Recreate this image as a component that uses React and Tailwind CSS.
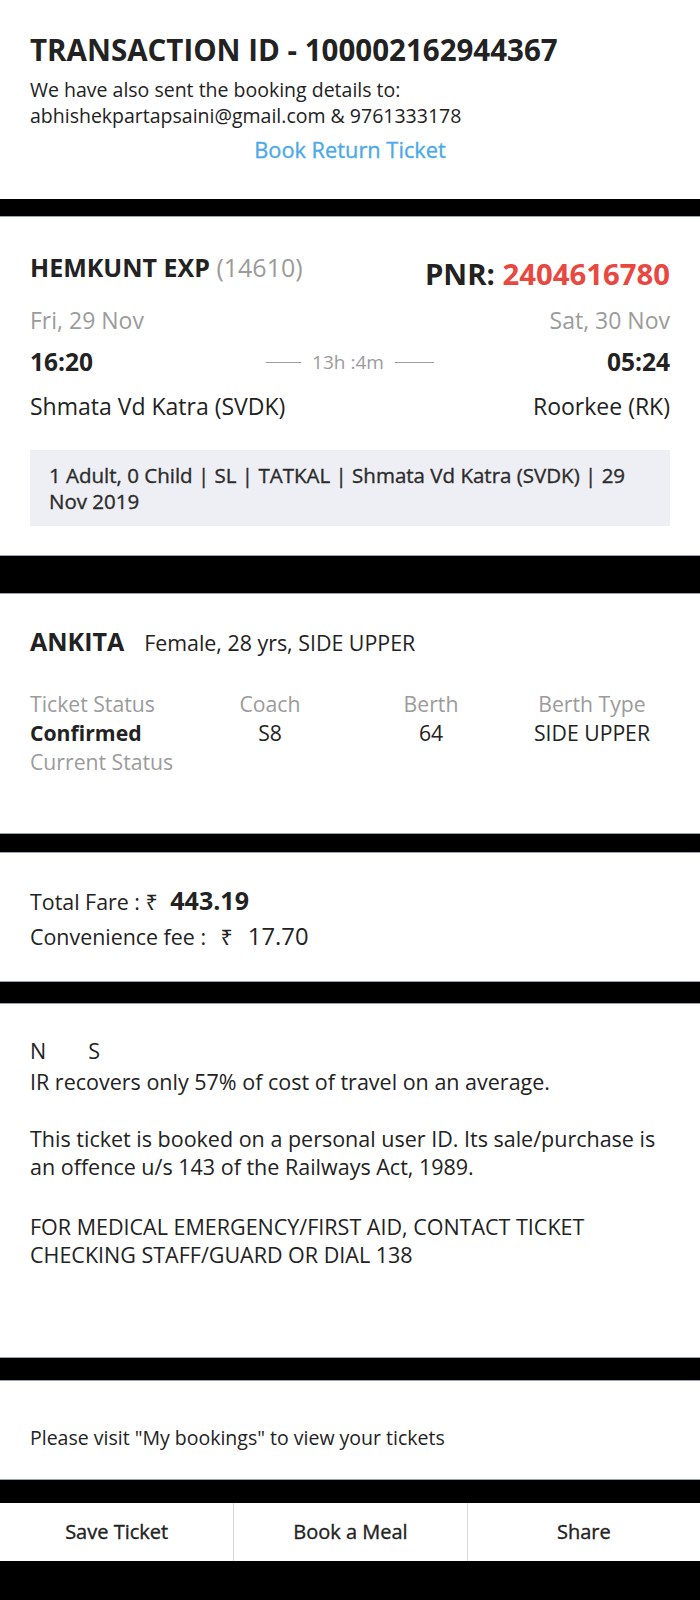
export default function App() {
  const font = { fontFamily: '"Open Sans", "Noto Sans", sans-serif' };
  // Open Sans here has no 500 weight, so a thin stroke stands in for "medium"
  const medium = '[-webkit-text-stroke:0.35px_currentcolor]';

  return (
    <div className="w-[700px] bg-white text-[#222222]" style={font}>
      {/* transaction */}
      <div className="h-[199px] px-[30px] pt-[32px]">
        <h1 className="text-[29.5px] font-bold leading-[36px]">TRANSACTION ID - 100002162944367</h1>
        <p className="mt-[9px] text-[19.5px] leading-[26px]">We have also sent the booking details to:</p>
        <p className="text-[19.5px] leading-[26px]">abhishekpartapsaini@gmail.com &amp; 9761333178</p>
        <div className={'mt-[7px] text-center text-[21.8px] leading-[28px] text-[#4ba9e9] ' + medium}>
          Book Return Ticket
        </div>
      </div>
      <div className="h-[18px] bg-black border-b border-gray-400" />

      {/* journey */}
      <div className="h-[338px] px-[30px] pt-[36px]">
        <div className="flex justify-between items-start">
          <div className="text-[25px] leading-[28px]">
            <span className="font-bold">HEMKUNT EXP</span>{' '}
            <span className="text-[#9b9b9b]">(14610)</span>
          </div>
          <div className="mt-1 text-[29.3px] leading-[34px] font-bold">
            PNR: <span className="text-[#e8483f]">2404616780</span>
          </div>
        </div>
        <div className="mt-4 flex justify-between text-[23px] leading-[26px] text-[#9b9b9b]">
          <span>Fri, 29 Nov</span>
          <span>Sat, 30 Nov</span>
        </div>
        <div className="mt-[15px] flex justify-between items-center text-[24.5px] leading-[28px]">
          <span className="font-bold w-[120px]">16:20</span>
          <div className="flex items-center gap-[11px] text-[19px] text-[#9b9b9b]">
            <span className="w-[35px] h-px bg-[#9b9b9b]" />
            <span>13h :4m</span>
            <span className="w-[39px] h-px bg-[#9b9b9b]" />
          </div>
          <span className="font-bold w-[120px] text-right">05:24</span>
        </div>
        <div className="mt-4 flex justify-between text-[23px] leading-[28px]">
          <span>Shmata Vd Katra (SVDK)</span>
          <span>Roorkee (RK)</span>
        </div>
        <div className={'mt-[30px] bg-[#eeeff4] pl-[19px] pr-[40px] py-3 text-[20.5px] leading-[26px] text-[#2b2b2b] ' + medium}>
          1 Adult, 0 Child | SL | TATKAL | Shmata Vd Katra (SVDK) | 29 Nov 2019
        </div>
      </div>
      <div className="h-[39px] bg-black border-y border-gray-400" />

      {/* passenger */}
      <div className="h-[239px] px-[30px] pt-[32px]">
        <div className="flex items-baseline gap-[20px] leading-[30px]">
          <span className="text-[25px] font-bold">ANKITA</span>
          <span className="text-[21.4px]">Female, 28 yrs, SIDE UPPER</span>
        </div>
        <div className="mt-[31px] grid grid-cols-[170px_140px_182px_140px] text-[21.2px] leading-[29px]">
          <span className="text-[#9b9b9b]">Ticket Status</span>
          <span className="text-center text-[#9b9b9b]">Coach</span>
          <span className="text-center text-[#9b9b9b]">Berth</span>
          <span className="text-center text-[#9b9b9b]">Berth Type</span>
          <span className="font-bold">Confirmed</span>
          <span className="text-center">S8</span>
          <span className="text-center">64</span>
          <span className="text-center">SIDE UPPER</span>
          <span className="text-[#9b9b9b] whitespace-nowrap">Current Status</span>
        </div>
      </div>
      <div className="h-[20px] bg-black border-y border-gray-400" />

      {/* fare */}
      <div className="h-[128px] px-[30px] pt-[30px] text-[21.4px] leading-[34px]">
        <div>
          Total Fare : ₹ <span className="ml-[7px] text-[25px] font-bold">443.19</span>
        </div>
        <div>
          Convenience fee : <span className="ml-[9px]">₹</span>
          <span className="ml-[15px] text-[23.8px]">17.70</span>
        </div>
      </div>
      <div className="h-[23px] bg-black border-y border-gray-400" />

      {/* notes */}
      <div className="h-[353px] px-[30px] pt-[33px] text-[21.5px] leading-[28px]">
        <div className="flex gap-[42px]">
          <span>N</span>
          <span>S</span>
        </div>
        <p className="mt-[3px]">IR recovers only 57% of cost of travel on an average.</p>
        <p className="mt-[29px]">This ticket is booked on a personal user ID. Its sale/purchase is an offence u/s 143 of the Railways Act, 1989.</p>
        <p className="mt-[32px]">FOR MEDICAL EMERGENCY/FIRST AID, CONTACT TICKET CHECKING STAFF/GUARD OR DIAL 138</p>
      </div>
      <div className="h-[24px] bg-black border-y border-gray-400" />

      {/* bookings */}
      <div className="h-[98px] px-[30px] pt-[44px] text-[19.5px] leading-[26px]">
        Please visit "My bookings" to view your tickets
      </div>
      <div className="h-[24px] bg-black border-t border-gray-400" />

      {/* actions */}
      <div className="h-[58px] grid grid-cols-3 text-[20px]">
        {['Save Ticket', 'Book a Meal', 'Share'].map((label, i) => (
          <button
            key={label}
            className={'flex items-center justify-center ' + medium + (i > 0 ? ' border-l border-[#d6d6d6]' : '')}
          >
            {label}
          </button>
        ))}
      </div>
      <div className="h-[39px] bg-black" />
    </div>
  );
}
